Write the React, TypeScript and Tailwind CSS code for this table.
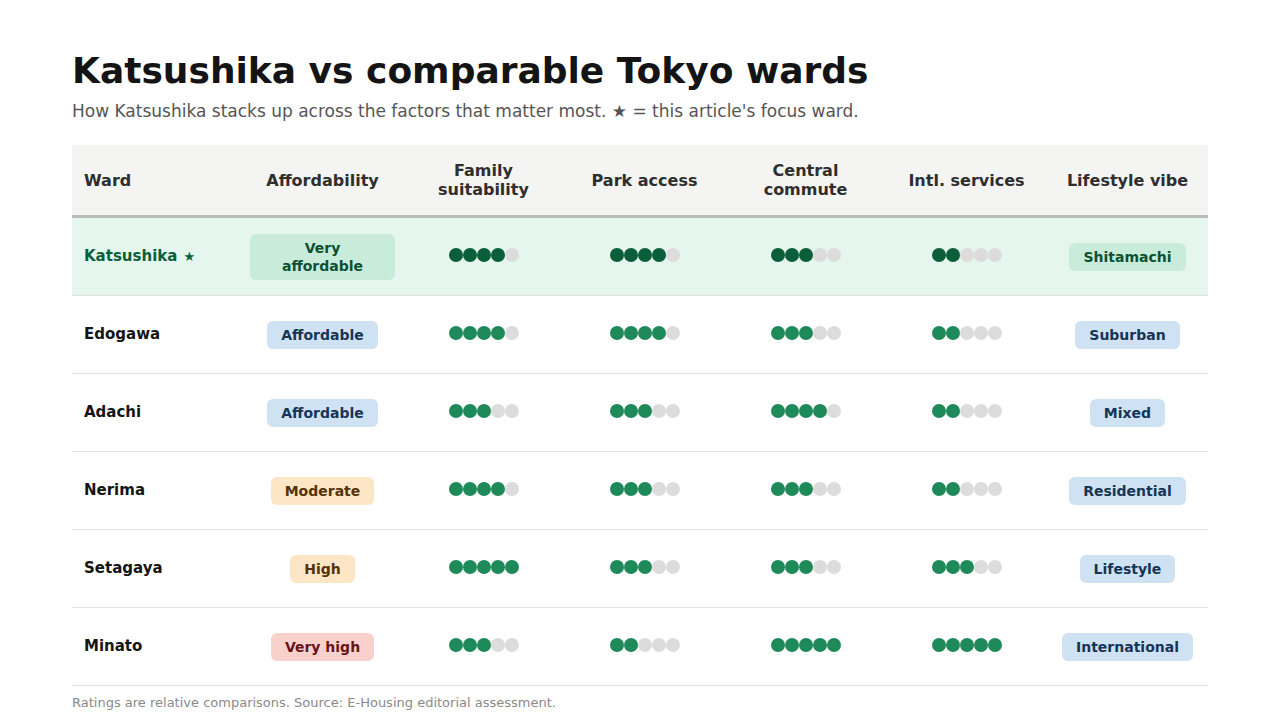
type Tone = "green" | "blue" | "orange" | "red";

type Row = {
  ward: string;
  focus?: boolean;
  afford: string;
  affordTone: Tone;
  family: number;
  park: number;
  commute: number;
  intl: number;
  vibe: string;
  vibeTone: Tone;
};

const rows: Row[] = [
  { ward: "Katsushika", focus: true, afford: "Very affordable", affordTone: "green", family: 4, park: 4, commute: 3, intl: 2, vibe: "Shitamachi", vibeTone: "green" },
  { ward: "Edogawa", afford: "Affordable", affordTone: "blue", family: 4, park: 4, commute: 3, intl: 2, vibe: "Suburban", vibeTone: "blue" },
  { ward: "Adachi", afford: "Affordable", affordTone: "blue", family: 3, park: 3, commute: 4, intl: 2, vibe: "Mixed", vibeTone: "blue" },
  { ward: "Nerima", afford: "Moderate", affordTone: "orange", family: 4, park: 3, commute: 3, intl: 2, vibe: "Residential", vibeTone: "blue" },
  { ward: "Setagaya", afford: "High", affordTone: "orange", family: 5, park: 3, commute: 3, intl: 3, vibe: "Lifestyle", vibeTone: "blue" },
  { ward: "Minato", afford: "Very high", affordTone: "red", family: 3, park: 2, commute: 5, intl: 5, vibe: "International", vibeTone: "blue" },
];

const toneClass: Record<Tone, string> = {
  green: "bg-[#c8ecd9] text-[#0b5134]",
  blue: "bg-[#cfe2f4] text-[#163555]",
  orange: "bg-[#fde6c6] text-[#55320a]",
  red: "bg-[#f8d1cd] text-[#661417]",
};

const headers = ["Affordability", "Family suitability", "Park access", "Central commute", "Intl. services", "Lifestyle vibe"];

export default function App() {
  return (
    <div className="min-h-screen bg-white px-[72px] pt-[49px] font-['DejaVu_Sans',sans-serif]">
      <h1 className="text-[36px] leading-[44px] font-bold text-[#141414]">Katsushika vs comparable Tokyo wards</h1>
      <p className="mt-[6px] text-[17px] leading-[24px] text-[#555]">
        How Katsushika stacks up across the factors that matter most. ★ = this article's focus ward.
      </p>

      <div className="mt-[22px]">
        {/* header */}
        <div className="grid grid-cols-[170px_repeat(6,1fr)] h-[73px] bg-[#f4f4f2] border-b-[3px] border-[#bcbcbc] text-[16px] leading-[19px] font-bold text-[#2e2e2e]">
          <div className="flex items-center px-3">Ward</div>
          {headers.map((h) => (
            <div key={h} className="flex items-center justify-center text-center px-3">
              {h}
            </div>
          ))}
        </div>

        {rows.map((r) => (
          <div
            key={r.ward}
            className={`grid grid-cols-[170px_repeat(6,1fr)] h-[78px] border-b border-[#e2e2e2] ${r.focus ? "bg-[#e5f6ee]" : "bg-white"}`}
          >
            <div className={`flex items-center px-3 text-[15px] font-bold ${r.focus ? "text-[#0b5e3a]" : "text-[#151515]"}`}>
              {r.ward}
              {r.focus && <span className="ml-[6px] text-[13px]">★</span>}
            </div>
            <div className="flex items-center justify-center px-2">
              <Badge tone={r.affordTone} text={r.afford} wide={r.focus} />
            </div>
            <Dots n={r.family} dark={r.focus} />
            <Dots n={r.park} dark={r.focus} />
            <Dots n={r.commute} dark={r.focus} />
            <Dots n={r.intl} dark={r.focus} />
            <div className="flex items-center justify-center px-2">
              <Badge tone={r.vibeTone} text={r.vibe} />
            </div>
          </div>
        ))}

        <p className="mt-[7px] text-[13px] text-[#8a8a8a]">
          Ratings are relative comparisons. Source: E-Housing editorial assessment.
        </p>
      </div>
    </div>
  );
}

function Badge({ tone, text, wide }: { tone: Tone; text: string; wide?: boolean }) {
  return (
    <span
      className={`${toneClass[tone]} ${wide ? "w-full" : ""} py-[5px] rounded-[6px] px-[14px] text-[14px] leading-[18px] font-bold text-center`}
    >
      {wide ? (
        <>
          Very
          <br />
          affordable
        </>
      ) : (
        text
      )}
    </span>
  );
}

function Dots({ n, dark }: { n: number; dark?: boolean }) {
  return (
    <div className="flex items-center justify-center">
      <div className="flex -translate-y-[2px]">
        {[0, 1, 2, 3, 4].map((i) => (
          <span
            key={i}
            className={`h-[14px] w-[14px] rounded-full ${i < n ? (dark ? "bg-[#0b5e3a]" : "bg-[#1e8a5a]") : "bg-[#dcdcdc]"}`}
          />
        ))}
      </div>
    </div>
  );
}
